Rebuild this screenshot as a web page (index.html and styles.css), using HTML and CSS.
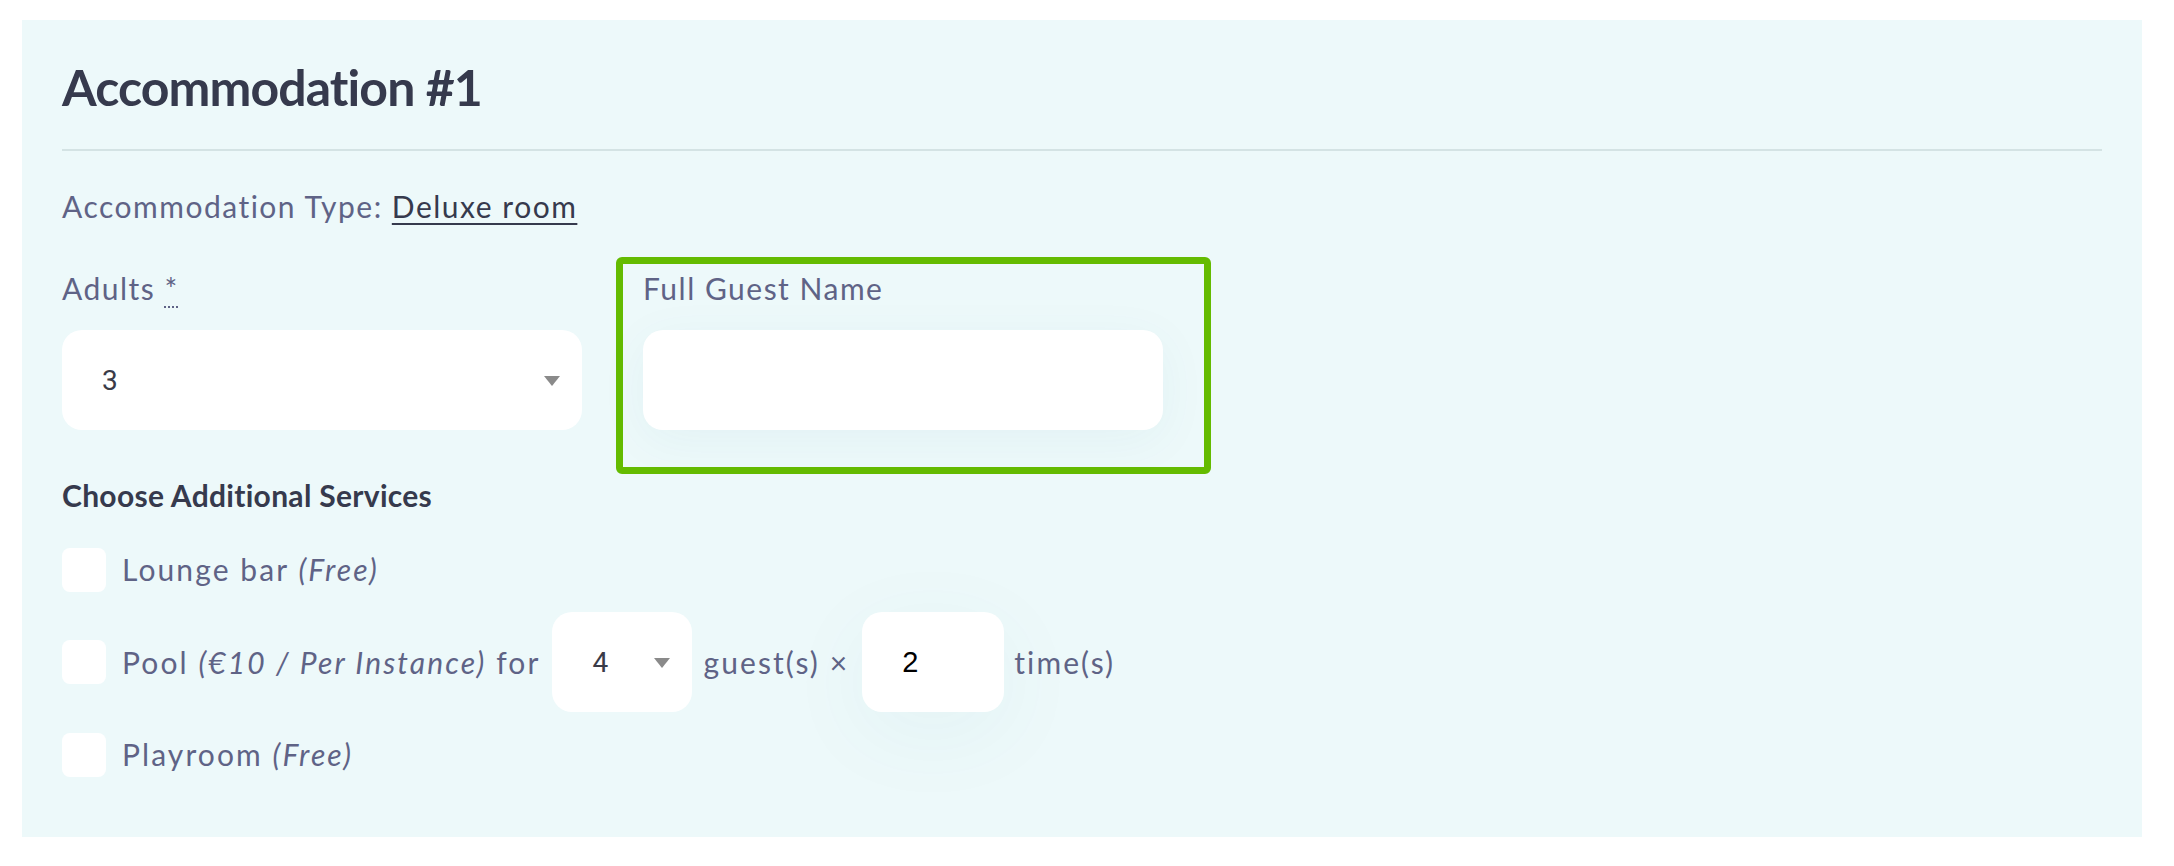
FILE: index.html
```html
<!DOCTYPE html>
<html lang="en">
<head>
<meta charset="utf-8">
<title>Accommodation #1</title>
<link rel="stylesheet" href="styles.css">
</head>
<body>
<div class="page">
  <section class="panel">
    <h2 class="title">Accommodation #1</h2>
    <hr class="divider">
    <p class="type">Accommodation Type: <a href="#" class="type-link">Deluxe room</a></p>
    <div class="fields">
      <div class="field field-adults">
        <div class="label">Adults <abbr class="req" title="required">*</abbr></div>
        <div class="select select-wide"><span class="select-value">3</span><span class="caret"></span></div>
      </div>
      <div class="field field-guest">
        <div class="label">Full Guest Name</div>
        <div class="input input-name"></div>
      </div>
    </div>
    <h3 class="services-title">Choose Additional Services</h3>
    <ul class="services">
      <li class="service">
        <span class="checkbox"></span>
        <span class="service-text">Lounge bar <em>(Free)</em></span>
      </li>
      <li class="service">
        <span class="checkbox"></span>
        <span class="service-text">Pool <em>(€10 / Per Instance)</em> for</span>
        <div class="select select-small"><span class="select-value">4</span><span class="caret"></span></div>
        <span class="service-text">guest(s) ×</span>
        <div class="input input-qty">2</div>
        <span class="service-text">time(s)</span>
      </li>
      <li class="service">
        <span class="checkbox"></span>
        <span class="service-text">Playroom <em>(Free)</em></span>
      </li>
    </ul>
  </section>
</div>
</body>
</html>
```
FILE: styles.css
```css
html, body {
  margin: 0;
  padding: 0;
  background: #ffffff;
}

body {
  font-family: "Lato", "Noto Sans", sans-serif;
  color: #5f6386;
}

.page {
  padding: 20px 32px 30px 22px;
}

.panel {
  background: #edf9fa;
  padding: 37px 40px 60px 40px;
}

.title {
  margin: 0 0 32px;
  font-size: 50px;
  line-height: 60px;
  font-weight: 700;
  color: #363a4d;
  letter-spacing: -0.9px;
}

.divider {
  border: 0;
  height: 2px;
  margin: 0 0 33px;
  background: #d4e3e4;
}

.type {
  margin: 0 0 28px;
  font-size: 30px;
  line-height: 45px;
  letter-spacing: 1.5px;
}

.type-link {
  color: #363a4d;
  text-decoration: underline;
  text-decoration-thickness: 2px;
  text-underline-offset: 5px;
}

.fields {
  display: flex;
  align-items: flex-start;
  gap: 34px;
}

.field {
  display: flex;
  flex-direction: column;
  gap: 19px;
}

.field-adults {
  margin-top: 9px;
  width: 520px;
}

.field-guest {
  border: 7px solid #64bb00;
  border-radius: 6px;
  padding: 2px 41px 37px 20px;
  width: 520px;
}

.label {
  font-size: 30px;
  line-height: 45px;
  letter-spacing: 1.5px;
}

.req {
  text-decoration: underline dotted;
  text-decoration-thickness: 2px;
  text-underline-offset: 6px;
  cursor: help;
}

.select,
.input {
  box-sizing: border-box;
  height: 100px;
  background: #ffffff;
  border-radius: 20px;
  display: flex;
  align-items: center;
}

.select {
  justify-content: space-between;
  padding: 0 22px 0 40px;
  font-family: "Roboto", "Liberation Sans", sans-serif;
  font-size: 28px;
  color: #3a3b48;
}

.select-wide {
  width: 520px;
}

.select-small {
  width: 140px;
  margin: 0 11px 0 12px;
}

.caret {
  width: 0;
  height: 0;
  border-left: 8px solid transparent;
  border-right: 8px solid transparent;
  border-top: 10px solid #8a8a8a;
  margin-top: 2px;
}

.input-name {
  width: 520px;
  box-shadow: 0 10px 50px rgba(40, 120, 130, 0.05);
}

.input-qty {
  width: 142px;
  margin: 0 10px 0 13px;
  padding-left: 40px;
  font-family: "Liberation Sans", "Arial", sans-serif;
  font-size: 29px;
  color: #000000;
  box-shadow: 0 20px 90px rgba(40, 120, 130, 0.05);
}

.services-title {
  margin: 3px 0 34px;
  font-size: 30px;
  line-height: 36px;
  font-weight: 700;
  color: #363a4d;
  letter-spacing: 0.3px;
}

.services {
  list-style: none;
  margin: 0;
  padding: 0;
  display: flex;
  flex-direction: column;
  gap: 20px;
}

.service {
  display: flex;
  align-items: center;
  min-height: 45px;
  font-size: 30px;
  line-height: 45px;
  letter-spacing: 2.1px;
}

.checkbox {
  width: 44px;
  height: 44px;
  background: #ffffff;
  border-radius: 8px;
  margin-right: 16px;
  flex: none;
}

.service-text {
  white-space: pre;
}

.service-text em {
  font-style: italic;
}
```
